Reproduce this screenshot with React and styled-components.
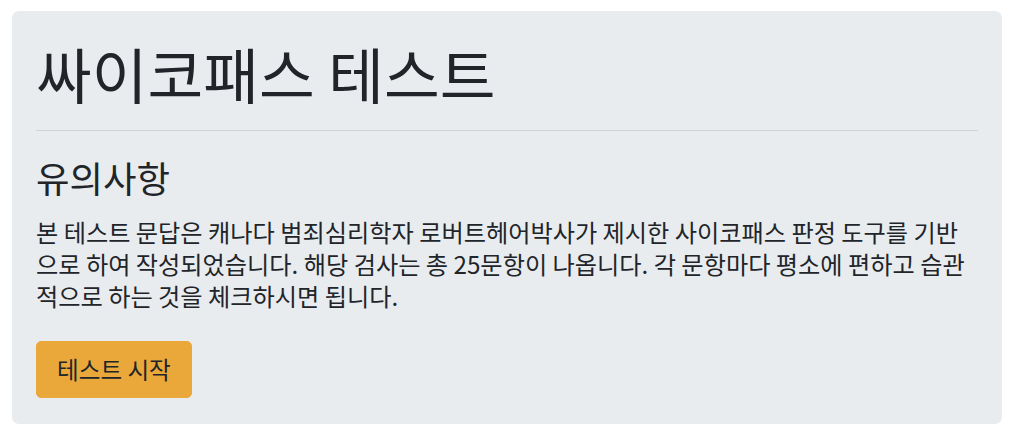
import React from "react";
import styled, { createGlobalStyle } from "styled-components";

const Global = createGlobalStyle`
  html, body { margin: 0; padding: 0; background: #ffffff; }
  body {
    font-family: "Noto Sans CJK KR", "Noto Sans", sans-serif;
    color: #212529;
  }
  * { box-sizing: border-box; }
`;

const Page = styled.div`
  padding: 11px 13px 12px 12px;
`;

const Jumbotron = styled.section`
  background: #e9ecef;
  border-radius: 7px;
  padding: 26px 24px 26px;
`;

const Title = styled.h1`
  margin: 0 0 21px;
  font-size: 60.6px;
  font-weight: 400;
  line-height: 72px;
`;

const Divider = styled.hr`
  margin: 16px 0 25px;
  border: 0;
  border-top: 1px solid rgba(0, 0, 0, 0.1);
`;

const Subtitle = styled.h2`
  margin: 0 0 17px;
  font-size: 36.4px;
  font-weight: 400;
  line-height: 43px;
`;

const Lead = styled.p`
  margin: 0 0 29px;
  font-size: 24.2px;
  font-weight: 400;
  line-height: 32px;
`;

const Button = styled.button`
  font-family: inherit;
  font-size: 23.6px;
  line-height: 31px;
  color: #212529;
  background: #eba83a;
  border: 1px solid #eba83a;
  border-radius: 5px;
  padding: 12px 20px;
  cursor: pointer;
`;

export default function App() {
  return (
    <>
      <Global />
      <Page>
        <Jumbotron>
          <Title>싸이코패스 테스트</Title>
          <Divider />
          <Subtitle>유의사항</Subtitle>
          <Lead>
            본 테스트 문답은 캐나다 범죄심리학자 로버트헤어박사가 제시한 사이코패스 판정 도구를 기반으로 하여 작성되었습니다. 해당 검사는 총 25문항이 나옵니다. 각 문항마다 평소에 편하고 습관적으로 하는 것을 체크하시면 됩니다.
          </Lead>
          <Button>테스트 시작</Button>
        </Jumbotron>
      </Page>
    </>
  );
}
